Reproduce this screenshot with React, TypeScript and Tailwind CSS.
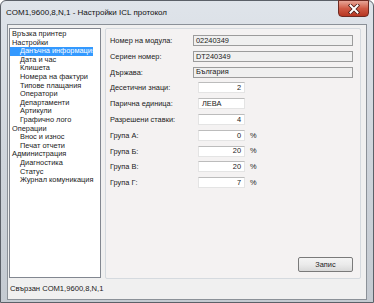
import React from "react";

const tree: { t: string; lvl: number; sel?: boolean }[] = [
  { t: "Връзка принтер", lvl: 0 },
  { t: "Настройки", lvl: 0 },
  { t: "Данъчна информация", lvl: 1, sel: true },
  { t: "Дата и час", lvl: 1 },
  { t: "Клишета", lvl: 1 },
  { t: "Номера на фактури", lvl: 1 },
  { t: "Типове плащания", lvl: 1 },
  { t: "Оператори", lvl: 1 },
  { t: "Департаменти", lvl: 1 },
  { t: "Артикули", lvl: 1 },
  { t: "Графично лого", lvl: 1 },
  { t: "Операции", lvl: 0 },
  { t: "Внос и износ", lvl: 1 },
  { t: "Печат отчети", lvl: 1 },
  { t: "Администрация", lvl: 0 },
  { t: "Диагностика", lvl: 1 },
  { t: "Статус", lvl: 1 },
  { t: "Журнал комуникация", lvl: 1 },
];

type Row =
  | { label: string; kind: "ro"; value: string }
  | { label: string; kind: "ed"; value: string; align: "left" | "right"; pct?: boolean };

const rows: Row[] = [
  { label: "Номер на модула:", kind: "ro", value: "02240349" },
  { label: "Сериен номер:", kind: "ro", value: "DT240349" },
  { label: "Държава:", kind: "ro", value: "България" },
  { label: "Десетични знаци:", kind: "ed", value: "2", align: "right" },
  { label: "Парична единица:", kind: "ed", value: "ЛЕВА", align: "left" },
  { label: "Разрешени ставки:", kind: "ed", value: "4", align: "right" },
  { label: "Група А:", kind: "ed", value: "0", align: "right", pct: true },
  { label: "Група Б:", kind: "ed", value: "20", align: "right", pct: true },
  { label: "Група В:", kind: "ed", value: "20", align: "right", pct: true },
  { label: "Група Г:", kind: "ed", value: "7", align: "right", pct: true },
];

export default function App() {
  return (
    <div className="w-[374px] h-[303px] overflow-hidden bg-white [font-family:'Liberation_Sans',Arial,sans-serif] text-[#1a1a1a]">
      <div className="relative w-[374px] h-[303px] flex flex-col border border-[#5b6068] rounded-t-[6px] bg-gradient-to-b from-[#dfe4ea] via-[#cfd5dc] to-[#c4cad1]">
        {/* title bar */}
        <div className="h-[23px] shrink-0 flex items-center pl-[5px] text-[8px] text-[#111]">
          COM1,9600,8,N,1 - Настройки ICL протокол
        </div>
        {/* close button */}
        <div className="absolute left-[337px] top-[-1px] w-[31px] h-[17px] rounded-b-[4px] border border-[#6e2a22] bg-gradient-to-b from-[#e6a597] via-[#cf5a45] to-[#b73621] flex items-center justify-center">
          <svg width="12" height="10" viewBox="0 0 12 10">
            <path d="M2.5 1.5 L9.5 8.5 M9.5 1.5 L2.5 8.5" stroke="#4a1a14" strokeWidth="3.6" strokeLinecap="square" />
            <path d="M2.5 1.5 L9.5 8.5 M9.5 1.5 L2.5 8.5" stroke="#ffffff" strokeWidth="2" strokeLinecap="square" />
          </svg>
        </div>
        {/* client */}
        <div className="flex-1 mx-[6px] mb-[2px] border border-[#8b9198] bg-[#f0f0f0] flex flex-col">
          <div className="flex mt-[3px] ml-[1px] gap-[4px]">
            {/* tree */}
            <div className="w-[92px] h-[250px] border border-[#828790] bg-white pt-[1px] text-[7.4px] leading-[8.6px]">
              {tree.map((it, i) => (
                <div key={i} className="h-[8.6px] flex">
                  {it.sel ? (
                    <div className="w-[83px] bg-[#3399ff] text-white pl-[10px] whitespace-nowrap">{it.t}</div>
                  ) : (
                    <div className={(it.lvl ? "pl-[10px]" : "pl-[2px]") + " whitespace-nowrap"}>{it.t}</div>
                  )}
                </div>
              ))}
            </div>
            {/* panel */}
            <div className="w-[256px] h-[251px] border border-[#d5dadf] rounded-[2px] bg-[#f4f2f2] flex flex-col pt-[6px] pl-[4px] pr-[7px] pb-[6px] text-[7.4px]">
              <div className="flex flex-col gap-[4.8px]">
                {rows.map((r, i) => (
                  <div key={i} className="flex items-center h-[11px]">
                    <div className="w-[83px] shrink-0 whitespace-nowrap">{r.label}</div>
                    {r.kind === "ro" ? (
                      <div className="w-[160px] h-[11px] border border-[#9c9c9c] bg-[#f0f0f0] pl-[2px] flex items-center leading-none">
                        {r.value}
                      </div>
                    ) : (
                      <>
                        <div
                          className={
                            "ml-[5px] w-[47px] h-[11px] border border-[#e4e4e4] border-t-[#bcbcbc] bg-white flex items-center leading-none " +
                            (r.align === "right" ? "justify-end pr-[3px]" : "pl-[3px]")
                          }
                        >
                          {r.value}
                        </div>
                        {r.pct && <div className="ml-[5px] leading-none">%</div>}
                      </>
                    )}
                  </div>
                ))}
              </div>
              <div className="mt-auto self-end w-[55px] h-[15px] border border-[#7a7a7a] rounded-[2px] bg-gradient-to-b from-[#f4f4f4] via-[#ebebeb] to-[#d9d9d9] flex items-center justify-center text-[7.4px]">
                Запис
              </div>
            </div>
          </div>
          <div className="flex-1 flex items-center pl-[2px] text-[7.6px]">Свързан COM1,9600,8,N,1</div>
        </div>
      </div>
    </div>
  );
}
